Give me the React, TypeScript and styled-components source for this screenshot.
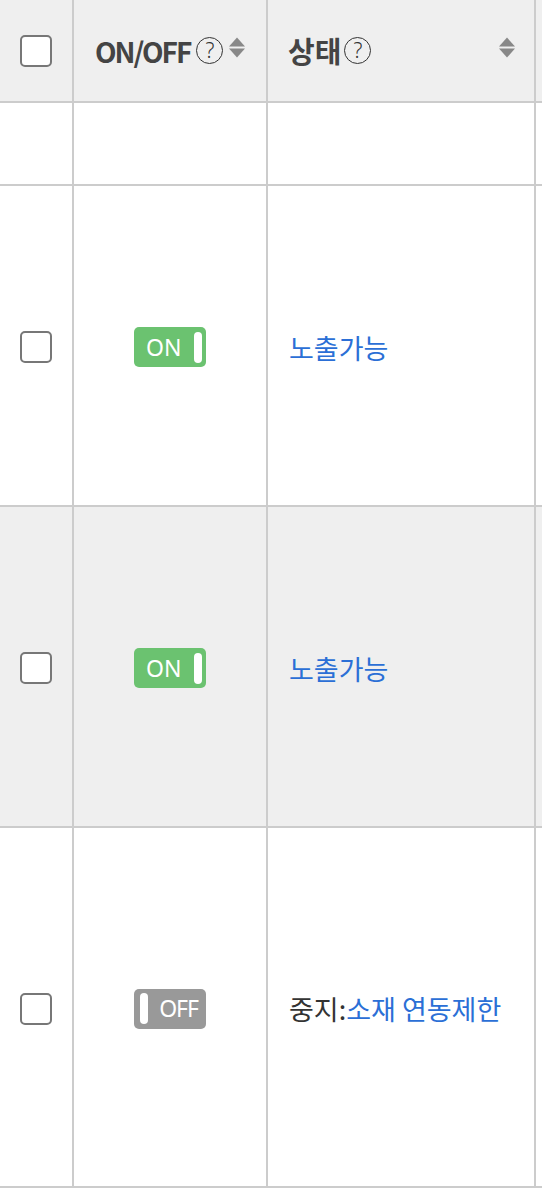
import React from "react";
import styled, { createGlobalStyle } from "styled-components";

const Global = createGlobalStyle`
  html, body { margin: 0; padding: 0; background: #ffffff; }
  body { font-family: "Noto Sans", "Noto Sans CJK KR", sans-serif; }
  * { box-sizing: border-box; }
`;

const Table = styled.div`
  display: grid;
  grid-template-columns: 74px 194px 268px 1fr;
  width: 542px;
`;

const Cell = styled.div<{ $h: number; $bg?: string; $last?: boolean; $pad?: string; $justify?: string }>`
  height: ${(p) => p.$h}px;
  background: ${(p) => p.$bg || "#ffffff"};
  border-bottom: 2px solid #cccccc;
  border-right: ${(p) => (p.$last ? "none" : "2px solid #cccccc")};
  display: flex;
  align-items: center;
  justify-content: ${(p) => p.$justify || "flex-start"};
  padding: ${(p) => p.$pad || "0"};
`;

const Check = styled.span`
  display: block;
  width: 32px;
  height: 32px;
  border: 2px solid #777777;
  border-radius: 5px;
  background: #ffffff;
`;

const HeadGroup = styled.div<{ $gap: number }>`
  display: flex;
  align-items: center;
  gap: ${(p) => p.$gap}px;
`;

const HeadLabel = styled.span<{ $size: number; $ls: number }>`
  font-family: "Noto Sans CJK KR", "Noto Sans", sans-serif;
  font-weight: 700;
  font-size: ${(p) => p.$size}px;
  letter-spacing: ${(p) => p.$ls}px;
  color: #444444;
  line-height: 1;
`;

const Help = styled.span`
  display: inline-flex;
  flex-shrink: 0;
  align-items: center;
  justify-content: center;
  width: 27px;
  height: 27px;
  border: 1px solid #333333;
  border-radius: 50%;
  font-family: "Noto Sans", sans-serif;
  font-weight: 300;
  font-size: 21px;
  line-height: 1;
  color: #333333;
  padding-bottom: 1px;
`;

const SortWrap = styled.span<{ $ml?: number }>`
  display: inline-flex;
  flex-shrink: 0;
  margin-left: ${(p) => p.$ml ?? 0}px;
  margin-top: -6px;
`;

const Sort = ({ ml }: { ml?: number }) => (
  <SortWrap $ml={ml}>
    <svg width="16" height="21" viewBox="0 0 16 21">
      <path d="M8 0.5 L16 9.5 L0 9.5 Z" fill="#888888" />
      <path d="M0 11.5 L16 11.5 L8 20.5 Z" fill="#888888" />
    </svg>
  </SortWrap>
);

const Toggle = styled.span<{ $on: boolean }>`
  display: flex;
  flex-direction: ${(p) => (p.$on ? "row" : "row-reverse")};
  align-items: center;
  justify-content: space-between;
  width: 72px;
  height: 40px;
  border-radius: 5px;
  background: ${(p) => (p.$on ? "#6bc270" : "#999999")};
  padding: ${(p) => (p.$on ? "0 4px 0 12px" : "0 8px 0 6px")};
`;

const ToggleText = styled.span<{ $ls: number }>`
  font-family: "Noto Sans", sans-serif;
  font-size: 23px;
  letter-spacing: ${(p) => p.$ls}px;
  color: #ffffff;
  line-height: 1;
`;

const Knob = styled.span`
  width: 8px;
  height: 31px;
  border-radius: 4px;
  background: #ffffff;
`;

const Status = styled.span`
  font-family: "Noto Sans CJK KR", "Noto Sans", sans-serif;
  font-size: 27px;
  color: #333333;
`;

const Link = styled.span`
  color: #2b6fd6;
`;

type Row = { h: number; bg?: string; toggle?: boolean; on?: boolean; status?: React.ReactNode; empty?: boolean };

const rows: Row[] = [
  { h: 83, empty: true },
  { h: 321, toggle: true, on: true, status: <Link>노출가능</Link> },
  { h: 321, bg: "#efefef", toggle: true, on: true, status: <Link>노출가능</Link> },
  {
    h: 360,
    toggle: true,
    on: false,
    status: (
      <>
        중지:<Link>소재 연동제한</Link>
      </>
    ),
  },
];

export default function App() {
  return (
    <>
      <Global />
      <Table>
        <Cell $h={103} $bg="#efefef" $justify="center">
          <Check />
        </Cell>
        <Cell $h={103} $bg="#efefef" $pad="0 0 0 21px">
          <HeadGroup $gap={6}>
            <HeadLabel $size={28} $ls={-2}>ON/OFF</HeadLabel>
            <Help>?</Help>
            <Sort />
          </HeadGroup>
        </Cell>
        <Cell $h={103} $bg="#efefef" $pad="0 19px 0 20px" $justify="space-between">
          <HeadGroup $gap={3}>
            <HeadLabel $size={29} $ls={0}>상태</HeadLabel>
            <Help>?</Help>
          </HeadGroup>
          <Sort />
        </Cell>
        <Cell $h={103} $bg="#efefef" $last />
        {rows.map((r, i) => (
          <React.Fragment key={i}>
            <Cell $h={r.h} $bg={r.bg} $justify="center" $pad="3px 0 0 0">
              {!r.empty && <Check />}
            </Cell>
            <Cell $h={r.h} $bg={r.bg} $justify="center" $pad="3px 0 0 0">
              {r.toggle && (
                <Toggle $on={!!r.on}>
                  <ToggleText $ls={r.on ? 0 : -1}>{r.on ? "ON" : "OFF"}</ToggleText>
                  <Knob />
                </Toggle>
              )}
            </Cell>
            <Cell $h={r.h} $bg={r.bg} $pad="3px 0 0 21px">
              {r.status && <Status>{r.status}</Status>}
            </Cell>
            <Cell $h={r.h} $bg={r.bg} $last />
          </React.Fragment>
        ))}
      </Table>
    </>
  );
}
